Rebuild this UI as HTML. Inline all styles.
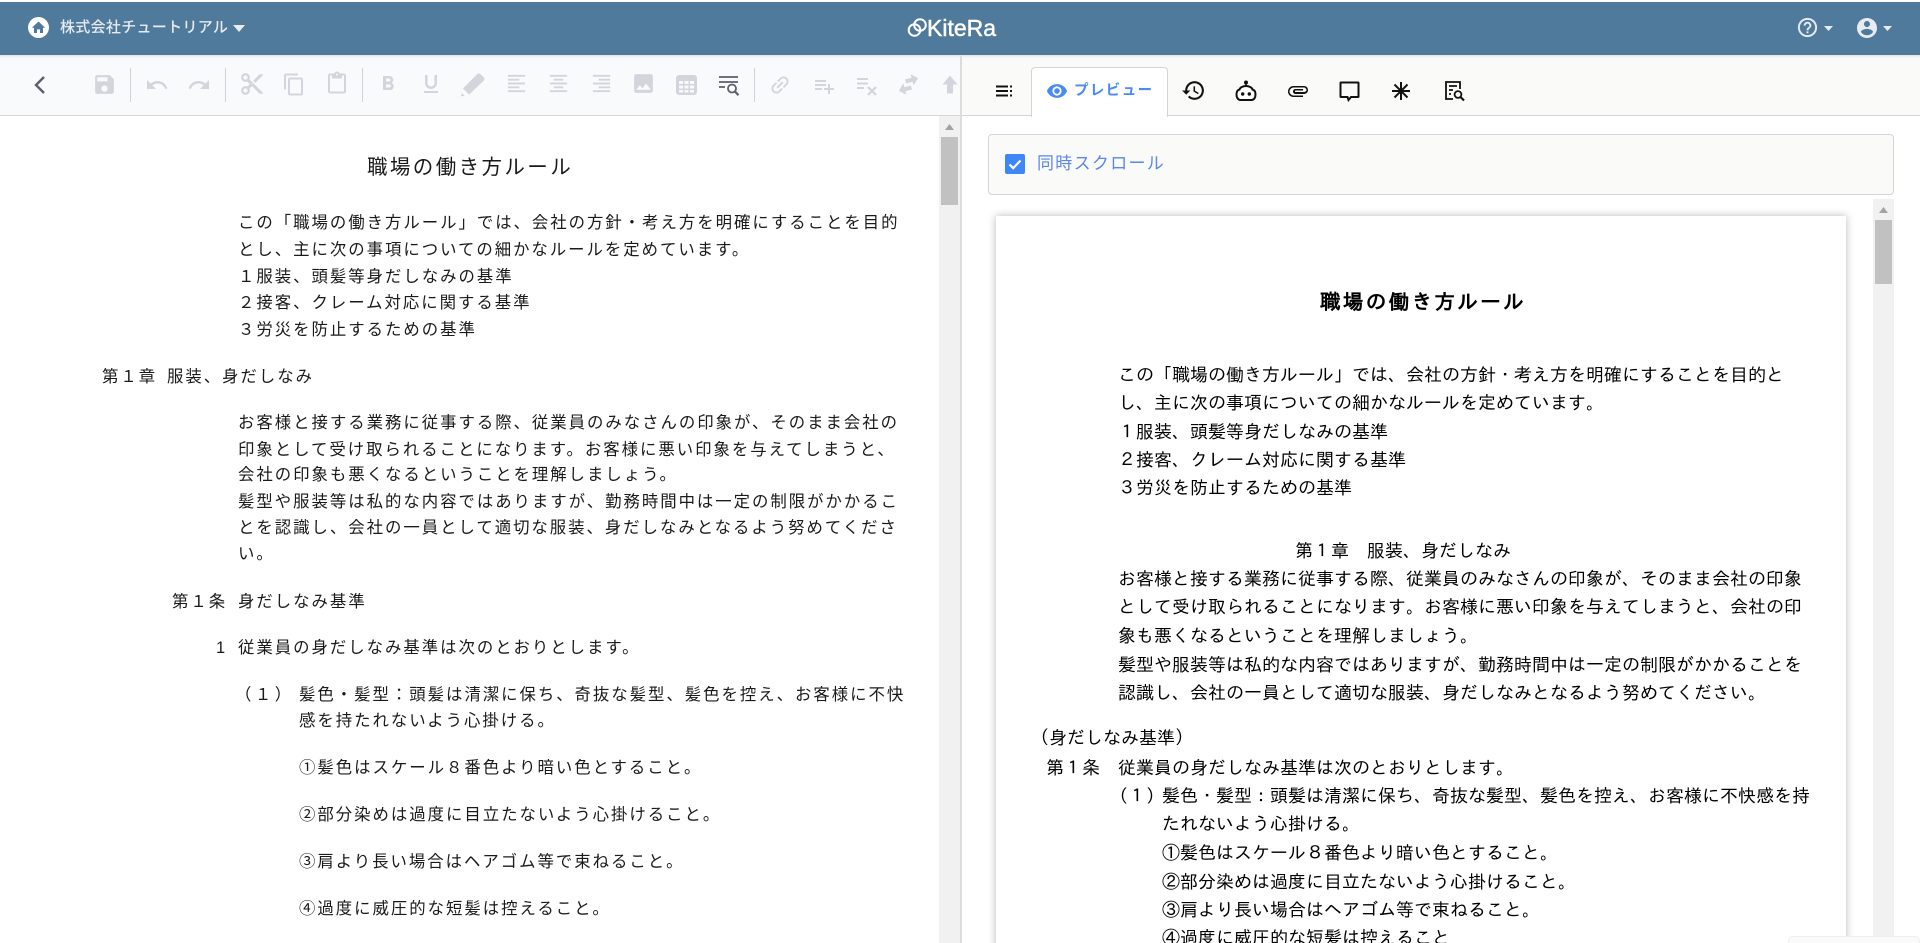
<!DOCTYPE html>
<html lang="ja">
<head>
<meta charset="utf-8">
<title>KiteRa</title>
<style>
html,body{margin:0;padding:0;width:1920px;height:943px;overflow:hidden;background:#fff;}
body{position:relative;font-family:"Liberation Sans","Noto Sans CJK JP",sans-serif;}
div,span,svg{position:absolute;}
.l{font-family:"Liberation Sans","Noto Sans CJK JP",sans-serif;font-size:16.4px;letter-spacing:1.98px;line-height:26px;height:26px;white-space:nowrap;color:#1a1a1a;}
.r{font-family:"IPAGothic","Noto Sans CJK JP",sans-serif;font-size:18px;line-height:28px;height:28px;white-space:nowrap;color:#000;}
svg.d{fill:#d3d5dc;}
svg.k{fill:#111;}
</style>
</head>
<body>
<!-- header -->
<div style="left:0;top:2px;width:1920px;height:53px;background:#507a9b;"></div>
<div style="left:0;top:55px;width:1920px;height:3px;background:linear-gradient(#e4e6e8,rgba(255,255,255,0));z-index:3;"></div>
<svg style="left:28px;top:17px;" width="21" height="21" viewBox="0 0 21 21"><circle cx="10.5" cy="10.5" r="10.5" fill="#fff"/><path d="M10.5 4.500L3.800 10.800h2.200v5.200h3v-3.600h3v3.600h3v-5.200h2.200z" fill="#507a9b"/></svg>
<div style="left:60px;top:17px;font-size:15px;letter-spacing:.3px;line-height:22px;color:#e6ecf1;white-space:nowrap;font-weight:500;">株式会社チュートリアル</div>
<svg style="left:233px;top:25px;" width="12" height="7" viewBox="0 0 12 7"><path d="M0 0h12L6 7z" fill="#e6ecf1"/></svg>
<svg style="left:907px;top:17px;" width="20" height="21" viewBox="0 0 20 21" fill="none" stroke="#fff" stroke-width="2"><circle cx="7.500" cy="13" r="5.800"/><circle cx="13" cy="8" r="5.800"/></svg>
<div style="left:927px;top:13px;font-family:'Liberation Sans',sans-serif;font-size:23px;line-height:30px;color:#fff;font-weight:400;-webkit-text-stroke:.45px #fff;white-space:nowrap;">KiteRa</div>
<svg style="left:1796px;top:16px;" width="23" height="23" viewBox="0 0 24 24" fill="#e6ecf1"><path d="M11 18h2v-2h-2v2zm1-16C6.480 2 2 6.480 2 12s4.480 10 10 10 10-4.480 10-10S17.520 2 12 2zm0 18c-4.410 0-8-3.590-8-8s3.590-8 8-8 8 3.590 8 8-3.590 8-8 8zm0-14c-2.210 0-4 1.790-4 4h2c0-1.100.9-2 2-2s2 .9 2 2c0 2-3 1.750-3 5h2c0-2.250 3-2.500 3-5 0-2.210-1.790-4-4-4z"/></svg>
<svg style="left:1824px;top:26px;" width="9" height="5" viewBox="0 0 9 5"><path d="M0 0h9L4.500 5z" fill="#e6ecf1"/></svg>
<svg style="left:1855px;top:16px;" width="24" height="24" viewBox="0 0 24 24" fill="#e6ecf1"><path d="M12 2C6.480 2 2 6.480 2 12s4.480 10 10 10 10-4.480 10-10S17.520 2 12 2zm0 3c1.660 0 3 1.340 3 3s-1.340 3-3 3-3-1.340-3-3 1.340-3 3-3zm0 14.200c-2.500 0-4.710-1.280-6-3.220.030-1.990 4-3.080 6-3.080 1.990 0 5.970 1.090 6 3.080-1.290 1.940-3.500 3.220-6 3.220z"/></svg>
<svg style="left:1883px;top:26px;" width="9" height="5" viewBox="0 0 9 5"><path d="M0 0h9L4.500 5z" fill="#e6ecf1"/></svg>

<!-- left toolbar -->
<div style="left:0;top:55px;width:960px;height:60px;background:#f9fafc;"></div>
<div style="left:0;top:115px;width:960px;height:1px;background:#d5d6da;"></div>
<!-- right toolbar -->
<div style="left:961px;top:55px;width:959px;height:60px;background:#fafaf8;"></div>
<div style="left:961px;top:115px;width:959px;height:1px;background:#d5d5d5;"></div>
<div style="left:960px;top:55px;width:2px;height:888px;background:#dcdcdc;"></div>

<svg style="left:32px;top:73px;" width="16" height="24" viewBox="0 0 16 24"><path d="M12 4L4 12l8 8" fill="none" stroke="#5b5f6e" stroke-width="2.400"/></svg>
<svg class="d" style="left:92px;top:72px;" width="25" height="25" viewBox="0 0 24 24"><path d="M17 3H5c-1.110 0-2 .9-2 2v14c0 1.100.89 2 2 2h14c1.100 0 2-.9 2-2V7l-4-4zm-5 16c-1.660 0-3-1.340-3-3s1.340-3 3-3 3 1.340 3 3-1.340 3-3 3zm3-10H5V5h10v4z"/></svg>
<div style="left:130px;top:68px;width:1px;height:34px;background:#d0d2d8;"></div>
<svg class="d" style="left:145px;top:73px;" width="24" height="24" viewBox="0 0 24 24"><path d="M12.500 8c-2.650 0-5.050.99-6.900 2.600L2 7v9h9l-3.620-3.620c1.390-1.160 3.160-1.880 5.120-1.880 3.540 0 6.550 2.310 7.600 5.500l2.370-.78C21.080 11.030 17.150 8 12.500 8z"/></svg>
<svg class="d" style="left:187px;top:73px;" width="24" height="24" viewBox="0 0 24 24"><path d="M18.400 10.600C16.550 8.990 14.150 8 11.500 8c-4.650 0-8.580 3.030-9.960 7.220L3.900 16c1.050-3.190 4.050-5.500 7.600-5.500 1.950 0 3.730.72 5.120 1.880L13 16h9V7l-3.600 3.600z"/></svg>
<div style="left:225px;top:68px;width:1px;height:34px;background:#d0d2d8;"></div>
<svg class="d" style="left:239px;top:71px;" width="26" height="26" viewBox="0 0 24 24"><path d="M9.640 7.640c.23-.5.36-1.050.36-1.640 0-2.210-1.790-4-4-4S2 3.790 2 6s1.790 4 4 4c.59 0 1.140-.13 1.640-.36L10 12l-2.360 2.360C7.140 14.130 6.590 14 6 14c-2.210 0-4 1.790-4 4s1.790 4 4 4 4-1.790 4-4c0-.59-.13-1.140-.36-1.640L12 14l7 7h3v-1L9.640 7.640zM6 8c-1.100 0-2-.89-2-2s.9-2 2-2 2 .89 2 2-.9 2-2 2zm0 12c-1.100 0-2-.89-2-2s.9-2 2-2 2 .89 2 2-.9 2-2 2zm6-7.500c-.28 0-.5-.22-.5-.5s.22-.5.5-.5.5.22.5.5-.22.5-.5.5zM19 3l-6 6 2 2 7-7V3z"/></svg>
<svg class="d" style="left:282px;top:72px;" width="24" height="25" viewBox="0 0 24 24"><path d="M16 1H4c-1.100 0-2 .9-2 2v14h2V3h12V1zm3 4H8c-1.100 0-2 .9-2 2v14c0 1.100.9 2 2 2h11c1.100 0 2-.9 2-2V7c0-1.100-.9-2-2-2zm0 16H8V7h11v14z"/></svg>
<svg class="d" style="left:325px;top:71px;" width="24" height="25" viewBox="0 0 24 24"><path d="M19 2h-4.180C14.400.84 13.300 0 12 0c-1.300 0-2.400.84-2.820 2H5c-1.100 0-2 .9-2 2v16c0 1.100.9 2 2 2h14c1.100 0 2-.9 2-2V4c0-1.100-.9-2-2-2zm-7 0c.55 0 1 .45 1 1s-.45 1-1 1-1-.45-1-1 .45-1 1-1zm7 18H5V4h2v3h10V4h2v16z"/></svg>
<div style="left:362px;top:68px;width:1px;height:34px;background:#d0d2d8;"></div>
<svg class="d" style="left:376px;top:72px;" width="24" height="24" viewBox="0 0 24 24"><path d="M15.600 10.790c.97-.67 1.650-1.770 1.650-2.790 0-2.260-1.750-4-4-4H7v14h7.040c2.090 0 3.710-1.700 3.710-3.790 0-1.520-.86-2.820-2.150-3.420zM10 6.500h3c.83 0 1.500.67 1.500 1.500s-.67 1.500-1.500 1.500h-3v-3zm3.500 9H10v-3h3.500c.83 0 1.500.67 1.500 1.500s-.67 1.500-1.500 1.500z"/></svg>
<svg class="d" style="left:419px;top:72px;" width="24" height="24" viewBox="0 0 24 24"><path d="M12 17c3.310 0 6-2.690 6-6V3h-2.500v8c0 1.930-1.570 3.500-3.500 3.500S8.500 12.930 8.500 11V3H6v8c0 3.310 2.690 6 6 6zm-7 2v2h14v-2H5z"/></svg>
<svg class="d" style="left:459px;top:71px;" width="27" height="27" viewBox="0 0 24 24"><path d="M1.500 22.500l3.500-.5-2.500-2.500zM3.500 15.500l5.500 5.500L22 8.500c.8-.8.8-2 0-2.800L19 2.800c-.8-.8-2-.8-2.800 0z"/></svg>
<svg class="d" style="left:505px;top:72px;" width="23" height="23" viewBox="0 0 24 24"><path d="M15 15H3v2h12v-2zm0-8H3v2h12V7zM3 13h18v-2H3v2zm0 8h18v-2H3v2zM3 3v2h18V3H3z"/></svg>
<svg class="d" style="left:547px;top:72px;" width="23" height="23" viewBox="0 0 24 24"><path d="M7 15v2h10v-2H7zm-4 6h18v-2H3v2zm0-8h18v-2H3v2zm4-6v2h10V7H7zM3 3v2h18V3H3z"/></svg>
<svg class="d" style="left:590px;top:72px;" width="23" height="23" viewBox="0 0 24 24"><path d="M3 21h18v-2H3v2zm6-4h12v-2H9v2zm-6-4h18v-2H3v2zm6-4h12V7H9v2zM3 3v2h18V3H3z"/></svg>
<svg class="d" style="left:631px;top:71px;" width="25" height="25" viewBox="0 0 24 24"><path d="M21 19V5c0-1.100-.9-2-2-2H5c-1.100 0-2 .9-2 2v14c0 1.100.9 2 2 2h14c1.100 0 2-.9 2-2zM8.500 13.500l2.500 3.010L14.500 12l4.500 6H5l3.500-4.500z"/></svg>
<svg style="left:676px;top:75px;" width="21" height="20" viewBox="0 0 21 20"><rect width="21" height="20" rx="3" fill="#d3d5dc"/><path d="M3 6h4v3H3zM8.500 6h4v3h-4zM14 6h4v3h-4zM3 10.500h4v3H3zM8.500 10.500h4v3h-4zM14 10.500h4v3h-4zM3 15h4v2.500H3zM8.500 15h4v2.500h-4zM14 15h4v2.500h-4z" fill="#f9fafc"/></svg>
<svg style="left:718px;top:75px;" width="22" height="22" viewBox="0 0 22 22" fill="none" stroke="#5b5f6e"><path d="M1 2h19M1 7h19M1 12h6" stroke-width="1.800"/><circle cx="14" cy="13.500" r="4" stroke-width="1.800"/><path d="M17 16.500l3.500 3.800" stroke-width="2.200"/></svg>
<div style="left:754px;top:68px;width:1px;height:34px;background:#d0d2d8;"></div>
<svg class="d" style="left:768px;top:73px;" width="24" height="24" viewBox="0 0 24 24"><path transform="rotate(-45 12 12)" d="M3.900 12c0-1.710 1.390-3.100 3.100-3.100h4V7H7c-2.760 0-5 2.240-5 5s2.240 5 5 5h4v-1.900H7c-1.710 0-3.100-1.390-3.100-3.100zM8 13h8v-2H8v2zm9-6h-4v1.900h4c1.710 0 3.100 1.390 3.100 3.100s-1.390 3.100-3.100 3.100h-4V17h4c2.760 0 5-2.240 5-5s-2.240-5-5-5z"/></svg>
<svg class="d" style="left:812px;top:74px;" width="24" height="24" viewBox="0 0 24 24"><path d="M14 10H3v2h11v-2zm0-4H3v2h11V6zm4 8v-4h-2v4h-4v2h4v4h2v-4h4v-2h-4zM3 16h7v-2H3v2z"/></svg>
<svg style="left:855px;top:75px;" width="24" height="22" viewBox="0 0 24 22" fill="none" stroke="#d3d5dc" stroke-width="2"><path d="M2 4h11M2 8.500h11M2 13h7"/><path d="M13 12l8 8M21 12l-8 8" stroke-width="2.200"/></svg>
<svg class="d" style="left:896px;top:72px;" width="25" height="25" viewBox="0 0 24 24"><path transform="rotate(-15 12 12)" d="M7.500 9.500L1.500 15.500l6 5.500v-3.500H14v-4H7.500zM22.500 8.500l-6-5.500v3.500H10v4h6.500V14z"/></svg>
<svg class="d" style="left:940px;top:75px;" width="20" height="20" viewBox="0 0 20 20"><path d="M10 .5L2.500 9.500H7v9h6v-9h4.500z"/></svg>

<!-- tabs -->
<svg style="left:995px;top:84px;" width="18" height="14" viewBox="0 0 18 14"><path d="M1 1.500h12v2H1zM1 6h12v2H1zM1 10.500h12v2H1zM15 1.500h2v2h-2zM15 6h2v2h-2zM15 10.500h2v2h-2z" fill="#111"/></svg>
<div style="left:1031px;top:67px;width:135px;height:49px;background:#fff;border:1px solid #d5d5d5;border-bottom:0;border-radius:4px 4px 0 0;box-sizing:content-box;z-index:1;"></div>
<svg style="left:1046px;top:80px;z-index:2;" width="22" height="22" viewBox="0 0 24 24" fill="#4a8af4"><path d="M12 4.500C7 4.500 2.730 7.610 1 12c1.730 4.390 6 7.500 11 7.500s9.270-3.110 11-7.500c-1.730-4.390-6-7.500-11-7.500zM12 17c-2.760 0-5-2.240-5-5s2.240-5 5-5 5 2.240 5 5-2.240 5-5 5zm0-8c-1.660 0-3 1.340-3 3s1.340 3 3 3 3-1.340 3-3-1.340-3-3-3z"/></svg>
<div style="left:1074px;top:80px;font-size:14.5px;font-weight:700;letter-spacing:1.400px;line-height:22px;color:#4a8af4;white-space:nowrap;z-index:2;">プレビュー</div>
<svg class="k" style="left:1181px;top:78px;" width="25" height="25" viewBox="0 0 24 24"><path d="M13 3c-4.970 0-9 4.030-9 9H1l3.890 3.890.07.14L9 12H6c0-3.870 3.130-7 7-7s7 3.130 7 7-3.130 7-7 7c-1.930 0-3.680-.79-4.940-2.060l-1.420 1.420C8.270 19.990 10.510 21 13 21c4.970 0 9-4.030 9-9s-4.030-9-9-9zm-1 5v5l4.280 2.540.72-1.210-3.500-2.080V8H12z"/></svg>
<svg style="left:1234px;top:80px;" width="24" height="22" viewBox="0 0 24 22"><circle cx="12" cy="2.500" r="2" fill="#111"/><path d="M12 3v4" stroke="#111" stroke-width="1.500"/><path d="M5.500 9.500C6 7.500 9 6 12 6s6 1.500 6.500 3.500c2 .5 3 2.500 3 5 0 3-1.500 5.500-4 5.500h-11c-2.500 0-4-2.500-4-5.500 0-2.500 1-4.500 3-5z" fill="#fff" stroke="#111" stroke-width="2"/><circle cx="8.700" cy="14" r="1.700" fill="#111"/><circle cx="15.300" cy="14" r="1.700" fill="#111"/></svg>
<svg class="k" style="left:1286px;top:79px;" width="24" height="24" viewBox="0 0 24 24"><path d="M2 12.500C2 9.460 4.460 7 7.500 7H18c2.210 0 4 1.790 4 4s-1.790 4-4 4H9.500C8.120 15 7 13.880 7 12.500S8.120 10 9.500 10H17v1.500H9.410c-.55 0-.55 1.500 0 1.500H18c1.100 0 2.500-.9 2.500-2s-1.400-2.500-2.500-2.500H7.500C5.570 8.500 3.500 10.570 3.500 12.500S5.570 16.500 7.500 16.500H17V18H7.500C4.460 18 2 15.540 2 12.500z"/></svg>
<svg style="left:1339px;top:81px;" width="21" height="21" viewBox="0 0 21 21" fill="none" stroke="#111" stroke-width="2"><path d="M2 1.500h17a.5.5 0 0 1 .500.500v13.500a.5.5 0 0 1-.5.500h-7l-2.500 3-1-3H2a.5.5 0 0 1-.5-.5V2a.5.5 0 0 1 .5-.5z"/></svg>
<svg style="left:1391px;top:81px;" width="20" height="20" viewBox="0 0 20 20" stroke="#111" stroke-width="2" fill="none"><path d="M10 1v18M1 10h18M3.500 3.500l13 13M16.500 3.500l-13 13"/></svg>
<svg style="left:1444px;top:80px;" width="21" height="22" viewBox="0 0 21 22" fill="none" stroke="#111" stroke-width="1.800"><path d="M16 9V2H2v17h7"/><path d="M5 6h8M5 10h4M5 14h2"/><circle cx="14" cy="14.500" r="3.400"/><path d="M16.500 17l3.500 3.500" stroke-width="2.200"/></svg>

<!-- left scrollbar -->
<div style="left:939px;top:116px;width:21px;height:827px;background:#f1f1f1;"></div>
<svg style="left:945px;top:124px;" width="9" height="6" viewBox="0 0 9 6"><path d="M0 6L4.500 0 9 6z" fill="#a3a3a3"/></svg>
<div style="left:941px;top:137px;width:17px;height:68px;background:#c1c1c1;"></div>

<!-- left document -->
<div class="l" style="left:367px;top:154px;font-size:20.500px;letter-spacing:2.400px;line-height:28px;height:28px;">職場の働き方ルール</div>
<div class="l" style="left:238px;top:210px;">この「職場の働き方ルール」では、会社の方針・考え方を明確にすることを目的</div>
<div class="l" style="left:238px;top:237px;">とし、主に次の事項についての細かなルールを定めています。</div>
<div class="l" style="left:238px;top:264px;">１服装、頭髪等身だしなみの基準</div>
<div class="l" style="left:238px;top:290px;">２接客、クレーム対応に関する基準</div>
<div class="l" style="left:238px;top:317px;">３労災を防止するための基準</div>
<div class="l" style="left:102px;top:364px;">第１章</div>
<div class="l" style="left:167px;top:364px;">服装、身だしなみ</div>
<div class="l" style="left:238px;top:410px;">お客様と接する業務に従事する際、従業員のみなさんの印象が、そのまま会社の</div>
<div class="l" style="left:238px;top:437px;">印象として受け取られることになります。お客様に悪い印象を与えてしまうと、</div>
<div class="l" style="left:238px;top:462px;">会社の印象も悪くなるということを理解しましょう。</div>
<div class="l" style="left:238px;top:489px;">髪型や服装等は私的な内容ではありますが、勤務時間中は一定の制限がかかるこ</div>
<div class="l" style="left:238px;top:515px;">とを認識し、会社の一員として適切な服装、身だしなみとなるよう努めてくださ</div>
<div class="l" style="left:238px;top:541px;">い。</div>
<div class="l" style="left:172px;top:589px;">第１条</div>
<div class="l" style="left:238px;top:589px;">身だしなみ基準</div>
<div class="l" style="left:216px;top:635px;">1</div>
<div class="l" style="left:238px;top:635px;">従業員の身だしなみ基準は次のとおりとします。</div>
<div class="l" style="left:235px;top:682px;letter-spacing:3.500px;">（１）</div>
<div class="l" style="left:299px;top:682px;">髪色・髪型：頭髪は清潔に保ち、奇抜な髪型、髪色を控え、お客様に不快</div>
<div class="l" style="left:299px;top:708px;">感を持たれないよう心掛ける。</div>
<div class="l" style="left:299px;top:755px;">①髪色はスケール８番色より暗い色とすること。</div>
<div class="l" style="left:299px;top:802px;">②部分染めは過度に目立たないよう心掛けること。</div>
<div class="l" style="left:299px;top:849px;">③肩より長い場合はヘアゴム等で束ねること。</div>
<div class="l" style="left:299px;top:896px;">④過度に威圧的な短髪は控えること。</div>

<!-- sync scroll panel -->
<div style="left:988px;top:134px;width:906px;height:61px;box-sizing:border-box;background:#fafaf8;border:1px solid #d5d5d5;border-radius:4px;"></div>
<svg style="left:1005px;top:154px;" width="20" height="20" viewBox="0 0 20 20"><rect width="20" height="20" rx="2" fill="#3f86f7"/><path d="M4.500 10.500l3.700 3.700 7.300-7.700" fill="none" stroke="#fff" stroke-width="2.200"/></svg>
<div style="left:1037px;top:152px;font-size:17px;letter-spacing:1.300px;line-height:24px;color:#5a86ee;white-space:nowrap;">同時スクロール</div>

<!-- right scrollbar -->
<div style="left:1873px;top:199px;width:21px;height:744px;background:#f1f1f1;"></div>
<svg style="left:1879px;top:207px;" width="9" height="6" viewBox="0 0 9 6"><path d="M0 6L4.500 0 9 6z" fill="#a3a3a3"/></svg>
<div style="left:1875px;top:220px;width:17px;height:64px;background:#c1c1c1;"></div>

<!-- right document -->
<div style="left:996px;top:216px;width:850px;height:740px;background:#fff;box-shadow:0 0 8px rgba(0,0,0,.28);overflow:hidden;"></div>
<div class="r" style="left:1320px;top:288px;font-size:20.500px;letter-spacing:2.400px;font-weight:700;">職場の働き方ルール</div>
<div class="r" style="left:1118px;top:361px;">この「職場の働き方ルール」では、会社の方針・考え方を明確にすることを目的と</div>
<div class="r" style="left:1118px;top:389px;">し、主に次の事項についての細かなルールを定めています。</div>
<div class="r" style="left:1118px;top:418px;">１服装、頭髪等身だしなみの基準</div>
<div class="r" style="left:1118px;top:446px;">２接客、クレーム対応に関する基準</div>
<div class="r" style="left:1118px;top:474px;">３労災を防止するための基準</div>
<div class="r" style="left:1295px;top:537px;">第１章　服装、身だしなみ</div>
<div class="r" style="left:1118px;top:565px;">お客様と接する業務に従事する際、従業員のみなさんの印象が、そのまま会社の印象</div>
<div class="r" style="left:1118px;top:593px;">として受け取られることになります。お客様に悪い印象を与えてしまうと、会社の印</div>
<div class="r" style="left:1118px;top:622px;">象も悪くなるということを理解しましょう。</div>
<div class="r" style="left:1118px;top:651px;">髪型や服装等は私的な内容ではありますが、勤務時間中は一定の制限がかかることを</div>
<div class="r" style="left:1118px;top:679px;">認識し、会社の一員として適切な服装、身だしなみとなるよう努めてください。</div>
<div class="r" style="left:1040px;top:724px;">(身だしなみ基準)</div>
<div class="r" style="left:1046px;top:754px;">第１条</div>
<div class="r" style="left:1118px;top:754px;">従業員の身だしなみ基準は次のとおりとします。</div>
<div class="r" style="left:1110px;top:782px;">（１）</div>
<div class="r" style="left:1162px;top:782px;">髪色・髪型：頭髪は清潔に保ち、奇抜な髪型、髪色を控え、お客様に不快感を持</div>
<div class="r" style="left:1162px;top:810px;">たれないよう心掛ける。</div>
<div class="r" style="left:1162px;top:839px;">①髪色はスケール８番色より暗い色とすること。</div>
<div class="r" style="left:1162px;top:868px;">②部分染めは過度に目立たないよう心掛けること。</div>
<div class="r" style="left:1162px;top:896px;">③肩より長い場合はヘアゴム等で束ねること。</div>
<div class="r" style="left:1162px;top:924px;">④過度に威圧的な短髪は控えること</div>

<!-- bottom right tab -->
<div style="left:1788px;top:936px;width:132px;height:7px;background:#fafafa;border:1px solid #eee;border-bottom:0;border-radius:5px 5px 0 0;box-sizing:border-box;"></div>
</body>
</html>
